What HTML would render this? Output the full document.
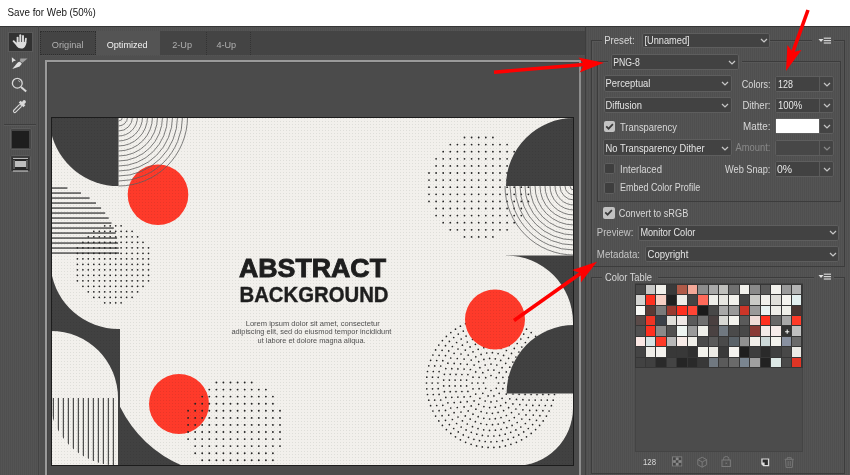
<!DOCTYPE html><html><head><meta charset="utf-8"><style>html,body{margin:0;padding:0;width:850px;height:475px;overflow:hidden;}body{position:relative;background:repeating-linear-gradient(90deg,#4f4f4f 0,#4f4f4f 1px,#545454 1px,#545454 2px);font-family:"Liberation Sans", sans-serif;}</style></head><body><div style="position:absolute;left:0;top:0;width:850px;height:26px;background:#ffffff"></div><div style="position:absolute;left:0;top:25.6px;width:850px;height:1px;background:#363636"></div><div style="position:absolute;left:38px;top:26px;width:1px;height:449px;background:#434343"></div><div style="position:absolute;left:8px;top:32.3px;width:24.8px;height:19.9px;background:#474747;box-shadow:inset 0 0 0 1px #5a5a5a"></div><div style="position:absolute;left:9.2px;top:33.3px;width:22.4px;height:17.9px;background:#323232"></div><svg style="position:absolute;left:0;top:0" width="40" height="180" viewBox="0 0 40 180"><g stroke="#dcdcdc" stroke-linecap="round" fill="none"><line x1="17.6" y1="37.6" x2="17.6" y2="43" stroke-width="1.9"/><line x1="20.3" y1="35.2" x2="20.3" y2="43" stroke-width="1.9"/><line x1="23" y1="36" x2="23" y2="43" stroke-width="1.9"/><line x1="25.9" y1="38.6" x2="25.3" y2="44" stroke-width="1.8"/><line x1="13.6" y1="41.2" x2="17.2" y2="45" stroke-width="1.9"/></g><path d="M16.6,42 L26.3,42 L25.6,45.5 Q24.5,48.6 21.2,48.6 Q18.3,48.6 16.6,46.2 Z" fill="#dcdcdc"/><path d="M11.85,57.2 L12,62.7 L13.5,61.2 L15.9,60.6 Z" fill="#dcdcdc"/><path d="M20.3,58.5 L27.5,58.4 L22.6,62.8 L20,61.2 Z" fill="#a0a0a0"/><path d="M12.3,68.9 L16.8,63.4 Q18.2,61.6 19.5,61.7 Q21.3,62 21.8,63.8 L19.6,66.4 Z" fill="#e2e2e2"/><circle cx="17.3" cy="83.2" r="4.9" fill="none" stroke="#d8d8d8" stroke-width="1.3"/><path d="M18.2,80.6 A2.6,2.6 0 0 1 20,82.2" fill="none" stroke="#d0d0d0" stroke-width="0.8"/><line x1="21" y1="87" x2="26.2" y2="91.6" stroke="#d8d8d8" stroke-width="2"/><g transform="translate(21.4 104.6) rotate(45)" fill="#dadada"><rect x="-1.7" y="-5.6" width="3.4" height="4" rx="1.6"/><rect x="-3.3" y="-2.3" width="6.6" height="2.8"/><rect x="-1.35" y="0.5" width="2.7" height="10.2" rx="1.35" fill="none" stroke="#d8d8d8" stroke-width="1.1"/></g></svg><div style="position:absolute;left:4px;top:124px;width:32px;height:1px;background:#3e3e3e"></div><div style="position:absolute;left:4px;top:125px;width:32px;height:1px;background:#5a5a5a"></div><div style="position:absolute;left:9.5px;top:128.3px;width:22.2px;height:22.099999999999994px;background:#454545;box-shadow:inset 0 0 0 1px #5c5c5c;border-radius:2px;"></div><div style="position:absolute;left:12px;top:130.5px;width:17px;height:17px;background:#1e1e1e"></div><div style="position:absolute;left:10.2px;top:154.5px;width:20.8px;height:17.69999999999999px;background:#3c3c3c;box-shadow:inset 0 0 0 1px #5c5c5c;border-radius:2px;"></div><svg style="position:absolute;left:0;top:150px" width="40" height="30" viewBox="0 150 40 30"><rect x="12.5" y="157.5" width="16" height="13" fill="#262626"/><line x1="13" y1="158.4" x2="28" y2="158.4" stroke="#c8c8c8" stroke-width="1"/><rect x="15" y="161" width="11" height="6" fill="#bdbdbd"/><line x1="13" y1="171" x2="28" y2="171" stroke="#d0d0d0" stroke-width="1"/><line x1="14" y1="160" x2="14" y2="169" stroke="#8a8a8a" stroke-width="1"/><line x1="27" y1="160" x2="27" y2="169" stroke="#8a8a8a" stroke-width="1"/></svg><div style="position:absolute;left:40px;top:31px;width:546px;height:24px;background:#444444"></div><div style="position:absolute;left:95.5px;top:31px;width:64.5px;height:24px;background:#545454"></div><div style="position:absolute;left:40px;top:31px;width:56px;height:24px;box-sizing:border-box;border:1px dotted #2e2e2e"></div><div style="position:absolute;left:206px;top:32px;width:0;height:23px;border-left:1px dotted #333"></div><div style="position:absolute;left:250.3px;top:32px;width:0;height:23px;border-left:1px dotted #333"></div><div style="position:absolute;left:40px;top:55.5px;width:546px;height:420px;background:#4f4f4f"></div><div style="position:absolute;left:44.7px;top:60px;width:536.3px;height:420px;background:#4b4b4b;border-left:2px solid #9a9a9a;border-top:2px solid #9a9a9a;border-right:2px solid #8e8e8e;box-sizing:border-box;box-shadow:inset 1px 1px 0 #444"></div><svg style="position:absolute;left:51px;top:117px" width="523" height="349" viewBox="51 117 523 349"><defs><clipPath id="ctl"><rect x="118.5" y="117" width="80" height="80"/></clipPath><clipPath id="ctr"><rect x="500" y="186" width="74" height="74"/></clipPath><pattern id="dith" width="3" height="3" patternUnits="userSpaceOnUse" x="0" y="0"><rect x="1" y="1" width="1" height="1" fill="#eaeceb"/></pattern><clipPath id="cvl"><circle cx="118" cy="397" r="68.5"/></clipPath></defs><rect x="51" y="117" width="523" height="349" fill="#f2f0ec"/><path d="M51,117 H118.5 V186 A69,69 0 0 1 51,132 Z" fill="#414141"/><circle cx="158" cy="194.7" r="30.3" fill="#fe3a2a"/><g clip-path="url(#ctl)"><circle cx="118.5" cy="117" r="4" fill="none" stroke="#606060" stroke-width="0.8"/><circle cx="118.5" cy="117" r="9" fill="none" stroke="#606060" stroke-width="0.8"/><circle cx="118.5" cy="117" r="14" fill="none" stroke="#606060" stroke-width="0.8"/><circle cx="118.5" cy="117" r="19" fill="none" stroke="#606060" stroke-width="0.8"/><circle cx="118.5" cy="117" r="24" fill="none" stroke="#606060" stroke-width="0.8"/><circle cx="118.5" cy="117" r="29" fill="none" stroke="#606060" stroke-width="0.8"/><circle cx="118.5" cy="117" r="34" fill="none" stroke="#606060" stroke-width="0.8"/><circle cx="118.5" cy="117" r="39" fill="none" stroke="#606060" stroke-width="0.8"/><circle cx="118.5" cy="117" r="44" fill="none" stroke="#606060" stroke-width="0.8"/><circle cx="118.5" cy="117" r="49" fill="none" stroke="#606060" stroke-width="0.8"/><circle cx="118.5" cy="117" r="54" fill="none" stroke="#606060" stroke-width="0.8"/><circle cx="118.5" cy="117" r="59" fill="none" stroke="#606060" stroke-width="0.8"/><circle cx="118.5" cy="117" r="64" fill="none" stroke="#606060" stroke-width="0.8"/><circle cx="118.5" cy="117" r="69" fill="none" stroke="#606060" stroke-width="0.8"/></g><rect x="51" y="252.4" width="68.0" height="1.3" fill="#3a3a3a"/><rect x="51" y="247.4" width="67.7" height="1.3" fill="#3a3a3a"/><rect x="51" y="242.4" width="67.1" height="1.3" fill="#3a3a3a"/><rect x="51" y="237.4" width="66.1" height="1.3" fill="#3a3a3a"/><rect x="51" y="232.4" width="64.7" height="1.3" fill="#3a3a3a"/><rect x="51" y="227.4" width="62.8" height="1.3" fill="#3a3a3a"/><rect x="51" y="222.4" width="60.5" height="1.3" fill="#3a3a3a"/><rect x="51" y="217.4" width="57.7" height="1.3" fill="#3a3a3a"/><rect x="51" y="212.4" width="54.2" height="1.3" fill="#3a3a3a"/><rect x="51" y="207.4" width="50.1" height="1.3" fill="#3a3a3a"/><rect x="51" y="202.4" width="45.0" height="1.3" fill="#3a3a3a"/><rect x="51" y="197.4" width="38.6" height="1.3" fill="#3a3a3a"/><rect x="51" y="192.4" width="30.0" height="1.3" fill="#3a3a3a"/><rect x="51" y="187.4" width="16.4" height="1.3" fill="#3a3a3a"/><path d="M77.4,247.8h0M77.4,253.3h0M77.4,258.8h0M77.4,264.3h0M77.4,269.8h0M77.4,275.3h0M77.4,280.8h0M82.9,242.3h0M82.9,247.8h0M82.9,253.3h0M82.9,258.8h0M82.9,264.3h0M82.9,269.8h0M82.9,275.3h0M82.9,280.8h0M82.9,286.3h0M88.3,236.8h0M88.3,242.3h0M88.3,247.8h0M88.3,253.3h0M88.3,258.8h0M88.3,264.3h0M88.3,269.8h0M88.3,275.3h0M88.3,280.8h0M88.3,286.3h0M88.3,291.8h0M93.8,231.3h0M93.8,236.8h0M93.8,242.3h0M93.8,247.8h0M93.8,253.3h0M93.8,258.8h0M93.8,264.3h0M93.8,269.8h0M93.8,275.3h0M93.8,280.8h0M93.8,286.3h0M93.8,291.8h0M93.8,297.3h0M99.3,231.3h0M99.3,236.8h0M99.3,242.3h0M99.3,247.8h0M99.3,253.3h0M99.3,258.8h0M99.3,264.3h0M99.3,269.8h0M99.3,275.3h0M99.3,280.8h0M99.3,286.3h0M99.3,291.8h0M99.3,297.3h0M104.7,225.8h0M104.7,231.3h0M104.7,236.8h0M104.7,242.3h0M104.7,247.8h0M104.7,253.3h0M104.7,258.8h0M104.7,264.3h0M104.7,269.8h0M104.7,275.3h0M104.7,280.8h0M104.7,286.3h0M104.7,291.8h0M104.7,297.3h0M104.7,302.8h0M110.2,225.8h0M110.2,231.3h0M110.2,236.8h0M110.2,242.3h0M110.2,247.8h0M110.2,253.3h0M110.2,258.8h0M110.2,264.3h0M110.2,269.8h0M110.2,275.3h0M110.2,280.8h0M110.2,286.3h0M110.2,291.8h0M110.2,297.3h0M110.2,302.8h0M115.7,225.8h0M115.7,231.3h0M115.7,236.8h0M115.7,242.3h0M115.7,247.8h0M115.7,253.3h0M115.7,258.8h0M115.7,264.3h0M115.7,269.8h0M115.7,275.3h0M115.7,280.8h0M115.7,286.3h0M115.7,291.8h0M115.7,297.3h0M115.7,302.8h0M121.1,225.8h0M121.1,231.3h0M121.1,236.8h0M121.1,242.3h0M121.1,247.8h0M121.1,253.3h0M121.1,258.8h0M121.1,264.3h0M121.1,269.8h0M121.1,275.3h0M121.1,280.8h0M121.1,286.3h0M121.1,291.8h0M121.1,297.3h0M121.1,302.8h0M126.6,231.3h0M126.6,236.8h0M126.6,242.3h0M126.6,247.8h0M126.6,253.3h0M126.6,258.8h0M126.6,264.3h0M126.6,269.8h0M126.6,275.3h0M126.6,280.8h0M126.6,286.3h0M126.6,291.8h0M126.6,297.3h0M132.1,231.3h0M132.1,236.8h0M132.1,242.3h0M132.1,247.8h0M132.1,253.3h0M132.1,258.8h0M132.1,264.3h0M132.1,269.8h0M132.1,275.3h0M132.1,280.8h0M132.1,286.3h0M132.1,291.8h0M132.1,297.3h0M137.6,236.8h0M137.6,242.3h0M137.6,247.8h0M137.6,253.3h0M137.6,258.8h0M137.6,264.3h0M137.6,269.8h0M137.6,275.3h0M137.6,280.8h0M137.6,286.3h0M137.6,291.8h0M143.0,242.3h0M143.0,247.8h0M143.0,253.3h0M143.0,258.8h0M143.0,264.3h0M143.0,269.8h0M143.0,275.3h0M143.0,280.8h0M143.0,286.3h0M148.5,247.8h0M148.5,253.3h0M148.5,258.8h0M148.5,264.3h0M148.5,269.8h0M148.5,275.3h0M148.5,280.8h0" stroke="#262626" stroke-width="1.75" stroke-linecap="round"/><path d="M51,270 A68,68 0 0 0 119,329 L120,329 L120,466 L51,466 Z" fill="#414141"/><path d="M51,466 V331 A67,67 0 0 1 118,398 V466 Z" fill="#f2f0ec"/><g clip-path="url(#cvl)"><rect x="112.8" y="398" width="1.1" height="70" fill="#3e3e3e"/><rect x="107.8" y="398" width="1.1" height="70" fill="#3e3e3e"/><rect x="102.8" y="398" width="1.1" height="70" fill="#3e3e3e"/><rect x="97.8" y="398" width="1.1" height="70" fill="#3e3e3e"/><rect x="92.8" y="398" width="1.1" height="70" fill="#3e3e3e"/><rect x="87.8" y="398" width="1.1" height="70" fill="#3e3e3e"/><rect x="82.8" y="398" width="1.1" height="70" fill="#3e3e3e"/><rect x="77.8" y="398" width="1.1" height="70" fill="#3e3e3e"/><rect x="72.8" y="398" width="1.1" height="70" fill="#3e3e3e"/><rect x="67.8" y="398" width="1.1" height="70" fill="#3e3e3e"/><rect x="62.8" y="398" width="1.1" height="70" fill="#3e3e3e"/><rect x="57.8" y="398" width="1.1" height="70" fill="#3e3e3e"/><rect x="52.8" y="398" width="1.1" height="70" fill="#3e3e3e"/></g><path d="M118,380 H120 V406.7 A126,126 0 0 0 182.9,466 H118 Z" fill="#414141"/><circle cx="179" cy="404" r="30" fill="#fe3a2a"/><path d="M188.1,410.8h0M188.1,417.9h0M188.1,424.9h0M188.1,432.0h0M188.1,439.1h0M195.2,403.7h0M195.2,410.8h0M195.2,417.9h0M195.2,424.9h0M195.2,432.0h0M195.2,439.1h0M195.2,446.1h0M195.2,453.2h0M202.2,396.6h0M202.2,403.7h0M202.2,410.8h0M202.2,417.9h0M202.2,424.9h0M202.2,432.0h0M202.2,439.1h0M202.2,446.1h0M202.2,453.2h0M202.2,460.3h0M209.3,389.6h0M209.3,396.6h0M209.3,403.7h0M209.3,410.8h0M209.3,417.9h0M209.3,424.9h0M209.3,432.0h0M209.3,439.1h0M209.3,446.1h0M209.3,453.2h0M209.3,460.3h0M216.4,382.5h0M216.4,389.6h0M216.4,396.6h0M216.4,403.7h0M216.4,410.8h0M216.4,417.9h0M216.4,424.9h0M216.4,432.0h0M216.4,439.1h0M216.4,446.1h0M216.4,453.2h0M216.4,460.3h0M223.4,382.5h0M223.4,389.6h0M223.4,396.6h0M223.4,403.7h0M223.4,410.8h0M223.4,417.9h0M223.4,424.9h0M223.4,432.0h0M223.4,439.1h0M223.4,446.1h0M223.4,453.2h0M223.4,460.3h0M230.5,382.5h0M230.5,389.6h0M230.5,396.6h0M230.5,403.7h0M230.5,410.8h0M230.5,417.9h0M230.5,424.9h0M230.5,432.0h0M230.5,439.1h0M230.5,446.1h0M230.5,453.2h0M230.5,460.3h0M237.6,382.5h0M237.6,389.6h0M237.6,396.6h0M237.6,403.7h0M237.6,410.8h0M237.6,417.9h0M237.6,424.9h0M237.6,432.0h0M237.6,439.1h0M237.6,446.1h0M237.6,453.2h0M237.6,460.3h0M244.7,382.5h0M244.7,389.6h0M244.7,396.6h0M244.7,403.7h0M244.7,410.8h0M244.7,417.9h0M244.7,424.9h0M244.7,432.0h0M244.7,439.1h0M244.7,446.1h0M244.7,453.2h0M244.7,460.3h0M251.7,382.5h0M251.7,389.6h0M251.7,396.6h0M251.7,403.7h0M251.7,410.8h0M251.7,417.9h0M251.7,424.9h0M251.7,432.0h0M251.7,439.1h0M251.7,446.1h0M251.7,453.2h0M251.7,460.3h0M258.8,389.6h0M258.8,396.6h0M258.8,403.7h0M258.8,410.8h0M258.8,417.9h0M258.8,424.9h0M258.8,432.0h0M258.8,439.1h0M258.8,446.1h0M258.8,453.2h0M258.8,460.3h0M265.9,389.6h0M265.9,396.6h0M265.9,403.7h0M265.9,410.8h0M265.9,417.9h0M265.9,424.9h0M265.9,432.0h0M265.9,439.1h0M265.9,446.1h0M265.9,453.2h0M265.9,460.3h0M272.9,396.6h0M272.9,403.7h0M272.9,410.8h0M272.9,417.9h0M272.9,424.9h0M272.9,432.0h0M272.9,439.1h0M272.9,446.1h0M272.9,453.2h0M272.9,460.3h0M280.0,410.8h0M280.0,417.9h0M280.0,424.9h0M280.0,432.0h0M280.0,439.1h0M280.0,446.1h0" stroke="#262626" stroke-width="1.9" stroke-linecap="round"/><path d="M429.0,173.0h0M429.0,180.1h0M429.0,187.2h0M429.0,194.3h0M429.0,201.4h0M436.1,158.8h0M436.1,165.9h0M436.1,173.0h0M436.1,180.1h0M436.1,187.2h0M436.1,194.3h0M436.1,201.4h0M436.1,208.5h0M436.1,215.6h0M443.2,151.7h0M443.2,158.8h0M443.2,165.9h0M443.2,173.0h0M443.2,180.1h0M443.2,187.2h0M443.2,194.3h0M443.2,201.4h0M443.2,208.5h0M443.2,215.6h0M443.2,222.7h0M450.3,144.6h0M450.3,151.7h0M450.3,158.8h0M450.3,165.9h0M450.3,173.0h0M450.3,180.1h0M450.3,187.2h0M450.3,194.3h0M450.3,201.4h0M450.3,208.5h0M450.3,215.6h0M450.3,222.7h0M450.3,229.8h0M457.4,144.6h0M457.4,151.7h0M457.4,158.8h0M457.4,165.9h0M457.4,173.0h0M457.4,180.1h0M457.4,187.2h0M457.4,194.3h0M457.4,201.4h0M457.4,208.5h0M457.4,215.6h0M457.4,222.7h0M457.4,229.8h0M464.5,137.5h0M464.5,144.6h0M464.5,151.7h0M464.5,158.8h0M464.5,165.9h0M464.5,173.0h0M464.5,180.1h0M464.5,187.2h0M464.5,194.3h0M464.5,201.4h0M464.5,208.5h0M464.5,215.6h0M464.5,222.7h0M464.5,229.8h0M464.5,236.9h0M471.6,137.5h0M471.6,144.6h0M471.6,151.7h0M471.6,158.8h0M471.6,165.9h0M471.6,173.0h0M471.6,180.1h0M471.6,187.2h0M471.6,194.3h0M471.6,201.4h0M471.6,208.5h0M471.6,215.6h0M471.6,222.7h0M471.6,229.8h0M471.6,236.9h0M478.7,137.5h0M478.7,144.6h0M478.7,151.7h0M478.7,158.8h0M478.7,165.9h0M478.7,173.0h0M478.7,180.1h0M478.7,187.2h0M478.7,194.3h0M478.7,201.4h0M478.7,208.5h0M478.7,215.6h0M478.7,222.7h0M478.7,229.8h0M478.7,236.9h0M485.8,137.5h0M485.8,144.6h0M485.8,151.7h0M485.8,158.8h0M485.8,165.9h0M485.8,173.0h0M485.8,180.1h0M485.8,187.2h0M485.8,194.3h0M485.8,201.4h0M485.8,208.5h0M485.8,215.6h0M485.8,222.7h0M485.8,229.8h0M485.8,236.9h0M492.9,137.5h0M492.9,144.6h0M492.9,151.7h0M492.9,158.8h0M492.9,165.9h0M492.9,173.0h0M492.9,180.1h0M492.9,187.2h0M492.9,194.3h0M492.9,201.4h0M492.9,208.5h0M492.9,215.6h0M492.9,222.7h0M492.9,229.8h0M492.9,236.9h0M500.0,144.6h0M500.0,151.7h0M500.0,158.8h0M500.0,165.9h0M500.0,173.0h0M500.0,180.1h0M500.0,187.2h0M500.0,194.3h0M500.0,201.4h0M500.0,208.5h0M500.0,215.6h0M500.0,222.7h0M500.0,229.8h0M507.1,144.6h0M507.1,151.7h0M507.1,158.8h0M507.1,165.9h0M507.1,173.0h0M507.1,180.1h0M507.1,187.2h0M507.1,194.3h0M507.1,201.4h0M507.1,208.5h0M507.1,215.6h0M507.1,222.7h0M507.1,229.8h0M514.2,151.7h0M514.2,158.8h0M514.2,165.9h0M514.2,173.0h0M514.2,180.1h0M514.2,187.2h0M514.2,194.3h0M514.2,201.4h0M514.2,208.5h0M514.2,215.6h0M514.2,222.7h0M521.3,158.8h0M521.3,165.9h0M521.3,173.0h0M521.3,180.1h0M521.3,187.2h0M521.3,194.3h0M521.3,201.4h0M521.3,208.5h0M521.3,215.6h0M528.4,173.0h0M528.4,180.1h0M528.4,187.2h0M528.4,194.3h0M528.4,201.4h0" stroke="#262626" stroke-width="1.8" stroke-linecap="round"/><path d="M574,117 V186 H506 A68,68 0 0 1 574,118 Z" fill="#414141"/><g clip-path="url(#ctr)"><circle cx="574" cy="186" r="4" fill="none" stroke="#606060" stroke-width="0.8"/><circle cx="574" cy="186" r="9" fill="none" stroke="#606060" stroke-width="0.8"/><circle cx="574" cy="186" r="14" fill="none" stroke="#606060" stroke-width="0.8"/><circle cx="574" cy="186" r="19" fill="none" stroke="#606060" stroke-width="0.8"/><circle cx="574" cy="186" r="24" fill="none" stroke="#606060" stroke-width="0.8"/><circle cx="574" cy="186" r="29" fill="none" stroke="#606060" stroke-width="0.8"/><circle cx="574" cy="186" r="34" fill="none" stroke="#606060" stroke-width="0.8"/><circle cx="574" cy="186" r="39" fill="none" stroke="#606060" stroke-width="0.8"/><circle cx="574" cy="186" r="44" fill="none" stroke="#606060" stroke-width="0.8"/><circle cx="574" cy="186" r="49" fill="none" stroke="#606060" stroke-width="0.8"/><circle cx="574" cy="186" r="54" fill="none" stroke="#606060" stroke-width="0.8"/><circle cx="574" cy="186" r="59" fill="none" stroke="#606060" stroke-width="0.8"/><circle cx="574" cy="186" r="64" fill="none" stroke="#606060" stroke-width="0.8"/><circle cx="574" cy="186" r="69" fill="none" stroke="#606060" stroke-width="0.8"/></g><rect x="506" y="255.5" width="68" height="211" fill="#414141"/><path d="M505,255.5 H506 A67,67 0 0 1 573,322.5 V408 A58,58 0 0 1 515,466 H505 Z" fill="#f2f0ec"/><path d="M498.5,383.0h0M496.3,388.3h0M491.0,390.5h0M485.7,388.3h0M483.5,383.0h0M485.7,377.7h0M491.0,375.5h0M496.3,377.7h0M504.2,383.0h0M502.9,388.7h0M499.2,393.3h0M493.9,395.9h0M488.1,395.9h0M482.8,393.3h0M479.1,388.7h0M477.8,383.0h0M479.1,377.3h0M482.8,372.7h0M488.1,370.1h0M493.9,370.1h0M499.2,372.7h0M502.9,377.3h0M509.9,383.0h0M509.0,388.8h0M506.3,394.1h0M502.1,398.3h0M496.8,401.0h0M491.0,401.9h0M485.2,401.0h0M479.9,398.3h0M475.7,394.1h0M473.0,388.8h0M472.1,383.0h0M473.0,377.2h0M475.7,371.9h0M479.9,367.7h0M485.2,365.0h0M491.0,364.1h0M496.8,365.0h0M502.1,367.7h0M506.3,371.9h0M509.0,377.2h0M515.6,383.0h0M514.9,388.7h0M513.0,394.0h0M509.8,398.8h0M505.7,402.7h0M500.7,405.6h0M495.3,407.2h0M489.6,407.6h0M483.9,406.6h0M478.7,404.3h0M474.1,400.9h0M470.4,396.5h0M467.9,391.4h0M466.6,385.9h0M466.6,380.1h0M467.9,374.6h0M470.4,369.5h0M474.1,365.1h0M478.7,361.7h0M483.9,359.4h0M489.6,358.4h0M495.3,358.8h0M500.7,360.4h0M505.7,363.3h0M509.8,367.2h0M513.0,372.0h0M514.9,377.3h0M521.3,383.0h0M520.8,388.7h0M519.1,394.3h0M516.5,399.4h0M512.9,403.9h0M508.6,407.7h0M503.6,410.6h0M498.1,412.4h0M492.4,413.3h0M486.7,413.0h0M481.1,411.6h0M475.9,409.2h0M471.2,405.9h0M467.2,401.7h0M464.1,396.9h0M461.9,391.5h0M460.8,385.9h0M460.8,380.1h0M461.9,374.5h0M464.1,369.1h0M467.2,364.3h0M471.2,360.1h0M475.8,356.8h0M481.1,354.4h0M486.7,353.0h0M492.4,352.7h0M498.1,353.6h0M503.6,355.4h0M508.6,358.3h0M512.9,362.1h0M516.5,366.6h0M519.1,371.7h0M520.8,377.3h0M527.0,383.0h0M526.5,388.8h0M525.1,394.4h0M522.9,399.7h0M519.8,404.6h0M515.9,409.0h0M511.5,412.6h0M506.4,415.5h0M501.0,417.6h0M495.3,418.7h0M489.6,419.0h0M483.8,418.3h0M478.2,416.7h0M473.0,414.2h0M468.2,410.9h0M464.1,406.9h0M460.6,402.2h0M457.9,397.1h0M456.0,391.6h0M455.1,385.9h0M455.1,380.1h0M456.0,374.4h0M457.9,368.9h0M460.6,363.8h0M464.1,359.1h0M468.2,355.1h0M473.0,351.8h0M478.2,349.3h0M483.8,347.7h0M489.6,347.0h0M495.3,347.3h0M501.0,348.4h0M506.4,350.5h0M511.5,353.4h0M515.9,357.0h0M519.8,361.4h0M522.9,366.3h0M525.1,371.6h0M526.5,377.2h0M532.7,383.0h0M532.3,388.8h0M531.1,394.5h0M529.1,400.0h0M526.4,405.1h0M522.9,409.8h0M518.9,414.0h0M514.3,417.6h0M509.3,420.5h0M503.9,422.7h0M498.2,424.1h0M492.5,424.7h0M486.6,424.5h0M480.9,423.5h0M475.4,421.7h0M470.2,419.1h0M465.3,415.9h0M461.0,412.0h0M457.3,407.5h0M454.2,402.6h0M451.8,397.3h0M450.2,391.7h0M449.4,385.9h0M449.4,380.1h0M450.2,374.3h0M451.8,368.7h0M454.2,363.4h0M457.3,358.5h0M461.0,354.0h0M465.3,350.1h0M470.1,346.9h0M475.4,344.3h0M480.9,342.5h0M486.6,341.5h0M492.5,341.3h0M498.2,341.9h0M503.9,343.3h0M509.3,345.5h0M514.3,348.4h0M518.9,352.0h0M522.9,356.2h0M526.4,360.9h0M529.1,366.0h0M531.1,371.5h0M532.3,377.2h0M538.4,383.0h0M538.0,388.8h0M537.0,394.6h0M535.2,400.1h0M532.8,405.4h0M529.7,410.4h0M526.0,414.9h0M521.8,419.0h0M517.2,422.5h0M512.1,425.4h0M506.8,427.7h0M501.1,429.3h0M495.4,430.2h0M489.5,430.4h0M483.7,429.8h0M478.0,428.6h0M472.5,426.7h0M467.3,424.0h0M462.4,420.8h0M458.0,417.0h0M454.1,412.7h0M450.7,408.0h0M447.9,402.8h0M445.8,397.4h0M444.4,391.7h0M443.7,385.9h0M443.7,380.1h0M444.4,374.3h0M445.8,368.6h0M447.9,363.2h0M450.7,358.0h0M454.1,353.3h0M458.0,349.0h0M462.4,345.2h0M467.3,342.0h0M472.5,339.3h0M478.0,337.4h0M483.7,336.2h0M489.5,335.6h0M495.4,335.8h0M501.1,336.7h0M506.8,338.3h0M512.1,340.6h0M517.2,343.5h0M521.8,347.0h0M526.0,351.1h0M529.7,355.6h0M532.8,360.6h0M535.2,365.9h0M537.0,371.4h0M538.0,377.2h0M544.1,383.0h0M543.8,388.7h0M542.9,394.4h0M541.3,400.0h0M539.2,405.3h0M536.5,410.4h0M533.3,415.1h0M529.6,419.5h0M525.4,423.5h0M520.8,427.0h0M515.9,429.9h0M510.7,432.3h0M505.2,434.2h0M499.6,435.4h0M493.9,436.0h0M488.1,436.0h0M482.4,435.4h0M476.8,434.2h0M471.3,432.3h0M466.1,429.9h0M461.2,427.0h0M456.6,423.5h0M452.4,419.5h0M448.7,415.1h0M445.5,410.4h0M442.8,405.3h0M440.7,400.0h0M439.1,394.4h0M438.2,388.7h0M437.9,383.0h0M438.2,377.3h0M439.1,371.6h0M440.7,366.0h0M442.8,360.7h0M445.5,355.6h0M448.7,350.9h0M452.4,346.5h0M456.6,342.5h0M461.2,339.0h0M466.1,336.1h0M471.3,333.7h0M476.8,331.8h0M482.4,330.6h0M488.1,330.0h0M493.9,330.0h0M499.6,330.6h0M505.2,331.8h0M510.7,333.7h0M515.9,336.1h0M520.8,339.0h0M525.4,342.5h0M529.6,346.5h0M533.3,350.9h0M536.5,355.6h0M539.2,360.7h0M541.3,366.0h0M542.9,371.6h0M543.8,377.3h0M549.8,383.0h0M549.5,388.8h0M548.7,394.5h0M547.3,400.1h0M545.3,405.5h0M542.9,410.7h0M539.9,415.7h0M536.5,420.3h0M532.6,424.6h0M528.3,428.5h0M523.7,431.9h0M518.7,434.9h0M513.5,437.3h0M508.1,439.3h0M502.5,440.7h0M496.8,441.5h0M491.0,441.8h0M485.2,441.5h0M479.5,440.7h0M473.9,439.3h0M468.5,437.3h0M463.3,434.9h0M458.3,431.9h0M453.7,428.5h0M449.4,424.6h0M445.5,420.3h0M442.1,415.7h0M439.1,410.7h0M436.7,405.5h0M434.7,400.1h0M433.3,394.5h0M432.5,388.8h0M432.2,383.0h0M432.5,377.2h0M433.3,371.5h0M434.7,365.9h0M436.7,360.5h0M439.1,355.3h0M442.1,350.3h0M445.5,345.7h0M449.4,341.4h0M453.7,337.5h0M458.3,334.1h0M463.3,331.1h0M468.5,328.7h0M473.9,326.7h0M479.5,325.3h0M485.2,324.5h0M491.0,324.2h0M496.8,324.5h0M502.5,325.3h0M508.1,326.7h0M513.5,328.7h0M518.7,331.1h0M523.7,334.1h0M528.3,337.5h0M532.6,341.4h0M536.5,345.7h0M539.9,350.3h0M542.9,355.3h0M545.3,360.5h0M547.3,365.9h0M548.7,371.5h0M549.5,377.2h0M555.5,383.0h0M555.2,388.8h0M554.5,394.5h0M553.2,400.2h0M551.4,405.7h0M549.1,411.0h0M546.4,416.1h0M543.2,420.9h0M539.6,425.4h0M535.6,429.6h0M531.2,433.4h0M526.5,436.8h0M521.6,439.8h0M516.4,442.3h0M510.9,444.3h0M505.4,445.9h0M499.7,446.9h0M493.9,447.4h0M488.1,447.4h0M482.3,446.9h0M476.6,445.9h0M471.1,444.3h0M465.6,442.3h0M460.4,439.8h0M455.5,436.8h0M450.8,433.4h0M446.4,429.6h0M442.4,425.4h0M438.8,420.9h0M435.6,416.1h0M432.9,411.0h0M430.6,405.7h0M428.8,400.2h0M427.5,394.5h0M426.8,388.8h0M426.5,383.0h0M426.8,377.2h0M427.5,371.5h0M428.8,365.8h0M430.6,360.3h0M432.9,355.0h0M435.6,349.9h0M438.8,345.1h0M442.4,340.6h0M446.4,336.4h0M450.8,332.6h0M455.5,329.2h0M460.4,326.2h0M465.6,323.7h0M471.1,321.7h0M476.6,320.1h0M482.3,319.1h0M488.1,318.6h0M493.9,318.6h0M499.7,319.1h0M505.4,320.1h0M510.9,321.7h0M516.4,323.7h0M521.6,326.2h0M526.5,329.2h0M531.2,332.6h0M535.6,336.4h0M539.6,340.6h0M543.2,345.1h0M546.4,349.9h0M549.1,355.0h0M551.4,360.3h0M553.2,365.8h0M554.5,371.5h0M555.2,377.2h0" stroke="#262626" stroke-width="1.7" stroke-linecap="round"/><circle cx="495" cy="319.5" r="30" fill="#fe3a2a"/><path d="M574,325 V393.6 H506.6 A67.4,68.6 0 0 1 574,325 Z" fill="#414141"/><rect x="51" y="117" width="523" height="349" fill="url(#dith)" style="mix-blend-mode:multiply"/><text x="312.5" y="277.0" font-family="Liberation Sans" font-weight="bold" font-size="25.6" fill="#1e1e1e" stroke="#1e1e1e" stroke-width="0.9" text-anchor="middle" textLength="147" lengthAdjust="spacingAndGlyphs">ABSTRACT</text><text x="314" y="302.2" font-family="Liberation Sans" font-weight="bold" font-size="21.4" fill="#1e1e1e" stroke="#1e1e1e" stroke-width="0.4" text-anchor="middle" textLength="149" lengthAdjust="spacingAndGlyphs">BACKGROUND</text><text x="312.7" y="325.8" font-family="Liberation Sans" font-size="8" fill="#505050" text-anchor="middle" textLength="134" lengthAdjust="spacingAndGlyphs">Lorem ipsum dolor sit amet, consectetur</text><text x="311.4" y="333.9" font-family="Liberation Sans" font-size="8" fill="#505050" text-anchor="middle" textLength="160" lengthAdjust="spacingAndGlyphs">adipiscing elit, sed do eiusmod tempor incididunt</text><text x="311.6" y="342.6" font-family="Liberation Sans" font-size="8" fill="#505050" text-anchor="middle" textLength="108" lengthAdjust="spacingAndGlyphs">ut labore et dolore magna aliqua.</text><rect x="51.5" y="117.5" width="522" height="348" fill="none" stroke="#1c1c1c" stroke-width="1"/></svg><div style="position:absolute;left:585px;top:26px;width:1px;height:449px;background:#3e3e3e"></div><div style="position:absolute;left:591px;top:39.6px;width:253.60000000000002px;height:227.20000000000002px;box-shadow:inset 0 0 0 1px #3c3c3c, inset 1px 1px 0 1px #585858"></div><div style="position:absolute;left:602px;top:33px;width:168px;height:14px;background:repeating-linear-gradient(90deg,#4f4f4f 0,#4f4f4f 1px,#545454 1px,#545454 2px);background-attachment:fixed"></div><div style="position:absolute;left:812px;top:33px;width:22px;height:14px;background:repeating-linear-gradient(90deg,#4f4f4f 0,#4f4f4f 1px,#545454 1px,#545454 2px);background-attachment:fixed"></div><div style="position:absolute;left:641.8px;top:32.9px;width:128.60000000000002px;height:15.5px;background:#424242;box-shadow:inset 0 0 0 1px #5e5e5e;border-radius:2px;"></div><svg style="position:absolute;left:759.6999999999999px;top:38.35px" width="8" height="5" viewBox="0 0 8 5"><polyline points="1,1 4,3.9 7,1" fill="none" stroke="#c6c6c6" stroke-width="1.3"/></svg><svg style="position:absolute;left:818px;top:37px" width="14" height="8" viewBox="0 0 14 8"><path d="M0.5,2 L5.5,2 L3,5 Z" fill="#e0e0e0"/><rect x="5.8" y="0.6" width="7.2" height="1.2" fill="#d4d4d4"/><rect x="5.8" y="3" width="7.2" height="1.2" fill="#d4d4d4"/><rect x="5.8" y="5.4" width="7.2" height="1.2" fill="#d4d4d4"/></svg><div style="position:absolute;left:597px;top:61px;width:243.5px;height:140.5px;box-shadow:inset 0 0 0 1px #3c3c3c, inset 1px 1px 0 1px #585858"></div><div style="position:absolute;left:608px;top:52px;width:134px;height:20px;background:repeating-linear-gradient(90deg,#4f4f4f 0,#4f4f4f 1px,#545454 1px,#545454 2px);background-attachment:fixed"></div><div style="position:absolute;left:611.4px;top:54px;width:127.39999999999998px;height:16px;background:#424242;box-shadow:inset 0 0 0 1px #5e5e5e;border-radius:2px;"></div><svg style="position:absolute;left:728.0999999999999px;top:59.7px" width="8" height="5" viewBox="0 0 8 5"><polyline points="1,1 4,3.9 7,1" fill="none" stroke="#c6c6c6" stroke-width="1.3"/></svg><div style="position:absolute;left:603.5px;top:75.1px;width:128.0px;height:16.700000000000003px;background:#424242;box-shadow:inset 0 0 0 1px #5e5e5e;border-radius:2px;"></div><svg style="position:absolute;left:720.8px;top:81.14999999999999px" width="8" height="5" viewBox="0 0 8 5"><polyline points="1,1 4,3.9 7,1" fill="none" stroke="#c6c6c6" stroke-width="1.3"/></svg><div style="position:absolute;left:603.5px;top:97.3px;width:128.0px;height:15.700000000000003px;background:#424242;box-shadow:inset 0 0 0 1px #5e5e5e;border-radius:2px;"></div><svg style="position:absolute;left:720.8px;top:102.85000000000001px" width="8" height="5" viewBox="0 0 8 5"><polyline points="1,1 4,3.9 7,1" fill="none" stroke="#c6c6c6" stroke-width="1.3"/></svg><div style="position:absolute;left:775px;top:76px;width:59px;height:16px;background:#444444;box-shadow:inset 0 0 0 1px #5e5e5e;border-radius:2px;"></div><div style="position:absolute;left:776px;top:77px;width:42.60000000000002px;height:14px;background:#424242"></div><div style="position:absolute;left:818.6px;top:77px;width:1px;height:14px;background:#5a5a5a"></div><svg style="position:absolute;left:822.8px;top:81.8px" width="8" height="5" viewBox="0 0 8 5"><polyline points="1,1 4,3.9 7,1" fill="none" stroke="#c4c4c4" stroke-width="1.3"/></svg><div style="position:absolute;left:775px;top:98px;width:59px;height:15px;background:#444444;box-shadow:inset 0 0 0 1px #5e5e5e;border-radius:2px;"></div><div style="position:absolute;left:776px;top:99px;width:42.60000000000002px;height:13px;background:#424242"></div><div style="position:absolute;left:818.6px;top:99px;width:1px;height:13px;background:#5a5a5a"></div><svg style="position:absolute;left:822.8px;top:103.3px" width="8" height="5" viewBox="0 0 8 5"><polyline points="1,1 4,3.9 7,1" fill="none" stroke="#c4c4c4" stroke-width="1.3"/></svg><div style="position:absolute;left:603.6999999999999px;top:121.3px;width:11.3px;height:11.2px;background:#c2c2c2;border-radius:2px"></div><svg style="position:absolute;left:603.6999999999999px;top:121.3px" width="12" height="12" viewBox="0 0 12 12"><polyline points="2.2,5.3 4.6,7.7 8.9,3.1" fill="none" stroke="#3a3a3a" stroke-width="1.7"/></svg><div style="position:absolute;left:775px;top:118px;width:59px;height:16px;background:#444444;box-shadow:inset 0 0 0 1px #5e5e5e;border-radius:2px;"></div><div style="position:absolute;left:776px;top:119px;width:42.60000000000002px;height:14px;background:#ffffff"></div><div style="position:absolute;left:818.6px;top:119px;width:1px;height:14px;background:#5a5a5a"></div><svg style="position:absolute;left:822.8px;top:123.8px" width="8" height="5" viewBox="0 0 8 5"><polyline points="1,1 4,3.9 7,1" fill="none" stroke="#c4c4c4" stroke-width="1.3"/></svg><div style="position:absolute;left:603.3px;top:139.4px;width:128.4000000000001px;height:17.0px;background:#424242;box-shadow:inset 0 0 0 1px #5e5e5e;border-radius:2px;"></div><svg style="position:absolute;left:721.0px;top:145.6px" width="8" height="5" viewBox="0 0 8 5"><polyline points="1,1 4,3.9 7,1" fill="none" stroke="#c6c6c6" stroke-width="1.3"/></svg><div style="position:absolute;left:775px;top:140px;width:59px;height:16px;background:#444444;box-shadow:inset 0 0 0 1px #5e5e5e;border-radius:2px;"></div><div style="position:absolute;left:776px;top:141px;width:42.60000000000002px;height:14px;background:#474747"></div><div style="position:absolute;left:818.6px;top:141px;width:1px;height:14px;background:#5a5a5a"></div><svg style="position:absolute;left:822.8px;top:145.8px" width="8" height="5" viewBox="0 0 8 5"><polyline points="1,1 4,3.9 7,1" fill="none" stroke="#8a8a8a" stroke-width="1.3"/></svg><div style="position:absolute;left:603.6999999999999px;top:162.9px;width:11.3px;height:11.2px;background:#3e3e3e;box-shadow:inset 0 0 0 1px #5e5e5e;border-radius:2px"></div><div style="position:absolute;left:775px;top:161px;width:59px;height:16px;background:#444444;box-shadow:inset 0 0 0 1px #5e5e5e;border-radius:2px;"></div><div style="position:absolute;left:776px;top:162px;width:42.60000000000002px;height:14px;background:#424242"></div><div style="position:absolute;left:818.6px;top:162px;width:1px;height:14px;background:#5a5a5a"></div><svg style="position:absolute;left:822.8px;top:166.8px" width="8" height="5" viewBox="0 0 8 5"><polyline points="1,1 4,3.9 7,1" fill="none" stroke="#c4c4c4" stroke-width="1.3"/></svg><div style="position:absolute;left:603.6999999999999px;top:182.4px;width:11.3px;height:11.2px;background:#3e3e3e;box-shadow:inset 0 0 0 1px #5e5e5e;border-radius:2px"></div><div style="position:absolute;left:603.4px;top:207.4px;width:11.3px;height:11.2px;background:#c2c2c2;border-radius:2px"></div><svg style="position:absolute;left:603.4px;top:207.4px" width="12" height="12" viewBox="0 0 12 12"><polyline points="2.2,5.3 4.6,7.7 8.9,3.1" fill="none" stroke="#3a3a3a" stroke-width="1.7"/></svg><div style="position:absolute;left:638.1px;top:224.5px;width:201.39999999999998px;height:16.30000000000001px;background:#424242;box-shadow:inset 0 0 0 1px #5e5e5e;border-radius:2px;"></div><svg style="position:absolute;left:828.8px;top:230.35px" width="8" height="5" viewBox="0 0 8 5"><polyline points="1,1 4,3.9 7,1" fill="none" stroke="#c6c6c6" stroke-width="1.3"/></svg><div style="position:absolute;left:644.7px;top:246px;width:194.79999999999995px;height:16px;background:#424242;box-shadow:inset 0 0 0 1px #5e5e5e;border-radius:2px;"></div><svg style="position:absolute;left:828.8px;top:251.7px" width="8" height="5" viewBox="0 0 8 5"><polyline points="1,1 4,3.9 7,1" fill="none" stroke="#c6c6c6" stroke-width="1.3"/></svg><div style="position:absolute;left:591px;top:276.7px;width:254px;height:197.3px;box-shadow:inset 0 0 0 1px #3c3c3c, inset 1px 1px 0 1px #585858"></div><div style="position:absolute;left:602px;top:270px;width:56px;height:12px;background:repeating-linear-gradient(90deg,#4f4f4f 0,#4f4f4f 1px,#545454 1px,#545454 2px);background-attachment:fixed"></div><div style="position:absolute;left:814px;top:270px;width:20px;height:12px;background:repeating-linear-gradient(90deg,#4f4f4f 0,#4f4f4f 1px,#545454 1px,#545454 2px);background-attachment:fixed"></div><svg style="position:absolute;left:818px;top:273.2px" width="14" height="8" viewBox="0 0 14 8"><path d="M0.5,2 L5.5,2 L3,5 Z" fill="#e0e0e0"/><rect x="5.8" y="0.6" width="7.2" height="1.2" fill="#d4d4d4"/><rect x="5.8" y="3" width="7.2" height="1.2" fill="#d4d4d4"/><rect x="5.8" y="5.4" width="7.2" height="1.2" fill="#d4d4d4"/></svg><div style="position:absolute;left:635px;top:283px;width:167.5px;height:169.3px;background:#4c4c4c;box-shadow:inset 0 0 0 1px #444444"></div><div style="position:absolute;left:635px;top:284px;width:167.6px;height:84.4px;background:#363636"></div><div style="position:absolute;left:635.50px;top:284.70px;width:9.4px;height:9.4px;background:#4a4a4a"></div><div style="position:absolute;left:645.94px;top:284.70px;width:9.4px;height:9.4px;background:#c8c8c6"></div><div style="position:absolute;left:656.38px;top:284.70px;width:9.4px;height:9.4px;background:#f0efea"></div><div style="position:absolute;left:666.82px;top:284.70px;width:9.4px;height:9.4px;background:#3a3a3a"></div><div style="position:absolute;left:677.26px;top:284.70px;width:9.4px;height:9.4px;background:#b05a48"></div><div style="position:absolute;left:687.70px;top:284.70px;width:9.4px;height:9.4px;background:#f4a898"></div><div style="position:absolute;left:698.14px;top:284.70px;width:9.4px;height:9.4px;background:#8c8c8c"></div><div style="position:absolute;left:708.58px;top:284.70px;width:9.4px;height:9.4px;background:#a8a8a8"></div><div style="position:absolute;left:719.02px;top:284.70px;width:9.4px;height:9.4px;background:#c0c0bd"></div><div style="position:absolute;left:729.46px;top:284.70px;width:9.4px;height:9.4px;background:#707070"></div><div style="position:absolute;left:739.90px;top:284.70px;width:9.4px;height:9.4px;background:#f2f1ec"></div><div style="position:absolute;left:750.34px;top:284.70px;width:9.4px;height:9.4px;background:#8a8a8a"></div><div style="position:absolute;left:760.78px;top:284.70px;width:9.4px;height:9.4px;background:#5a5a5a"></div><div style="position:absolute;left:771.22px;top:284.70px;width:9.4px;height:9.4px;background:#f3f2ed"></div><div style="position:absolute;left:781.66px;top:284.70px;width:9.4px;height:9.4px;background:#9a9a9a"></div><div style="position:absolute;left:792.10px;top:284.70px;width:9.4px;height:9.4px;background:#b4b4b4"></div><div style="position:absolute;left:635.50px;top:295.14px;width:9.4px;height:9.4px;background:#d4d4d2"></div><div style="position:absolute;left:645.94px;top:295.14px;width:9.4px;height:9.4px;background:#ff3020"></div><div style="position:absolute;left:656.38px;top:295.14px;width:9.4px;height:9.4px;background:#f7cfc4"></div><div style="position:absolute;left:666.82px;top:295.14px;width:9.4px;height:9.4px;background:#202020"></div><div style="position:absolute;left:677.26px;top:295.14px;width:9.4px;height:9.4px;background:#eeede8"></div><div style="position:absolute;left:687.70px;top:295.14px;width:9.4px;height:9.4px;background:#444444"></div><div style="position:absolute;left:698.14px;top:295.14px;width:9.4px;height:9.4px;background:#ff6a5a"></div><div style="position:absolute;left:708.58px;top:295.14px;width:9.4px;height:9.4px;background:#efefea"></div><div style="position:absolute;left:719.02px;top:295.14px;width:9.4px;height:9.4px;background:#e8e7e2"></div><div style="position:absolute;left:729.46px;top:295.14px;width:9.4px;height:9.4px;background:#f3f2ed"></div><div style="position:absolute;left:739.90px;top:295.14px;width:9.4px;height:9.4px;background:#454545"></div><div style="position:absolute;left:750.34px;top:295.14px;width:9.4px;height:9.4px;background:#cacac6"></div><div style="position:absolute;left:760.78px;top:295.14px;width:9.4px;height:9.4px;background:#f1f0ec"></div><div style="position:absolute;left:771.22px;top:295.14px;width:9.4px;height:9.4px;background:#e0dfda"></div><div style="position:absolute;left:781.66px;top:295.14px;width:9.4px;height:9.4px;background:#f6f5f0"></div><div style="position:absolute;left:792.10px;top:295.14px;width:9.4px;height:9.4px;background:#e4f0f0"></div><div style="position:absolute;left:635.50px;top:305.58px;width:9.4px;height:9.4px;background:#f8f8f5"></div><div style="position:absolute;left:645.94px;top:305.58px;width:9.4px;height:9.4px;background:#5a3a35"></div><div style="position:absolute;left:656.38px;top:305.58px;width:9.4px;height:9.4px;background:#7a7a7a"></div><div style="position:absolute;left:666.82px;top:305.58px;width:9.4px;height:9.4px;background:#9a3a30"></div><div style="position:absolute;left:677.26px;top:305.58px;width:9.4px;height:9.4px;background:#ff3020"></div><div style="position:absolute;left:687.70px;top:305.58px;width:9.4px;height:9.4px;background:#ff4535"></div><div style="position:absolute;left:698.14px;top:305.58px;width:9.4px;height:9.4px;background:#1a1a1a"></div><div style="position:absolute;left:708.58px;top:305.58px;width:9.4px;height:9.4px;background:#484848"></div><div style="position:absolute;left:719.02px;top:305.58px;width:9.4px;height:9.4px;background:#a8a8a8"></div><div style="position:absolute;left:729.46px;top:305.58px;width:9.4px;height:9.4px;background:#999999"></div><div style="position:absolute;left:739.90px;top:305.58px;width:9.4px;height:9.4px;background:#cc3528"></div><div style="position:absolute;left:750.34px;top:305.58px;width:9.4px;height:9.4px;background:#9a9a9a"></div><div style="position:absolute;left:760.78px;top:305.58px;width:9.4px;height:9.4px;background:#e8f2f2"></div><div style="position:absolute;left:771.22px;top:305.58px;width:9.4px;height:9.4px;background:#eeede8"></div><div style="position:absolute;left:781.66px;top:305.58px;width:9.4px;height:9.4px;background:#f0f0ea"></div><div style="position:absolute;left:792.10px;top:305.58px;width:9.4px;height:9.4px;background:#4a3532"></div><div style="position:absolute;left:635.50px;top:316.02px;width:9.4px;height:9.4px;background:#5a4a48"></div><div style="position:absolute;left:645.94px;top:316.02px;width:9.4px;height:9.4px;background:#ee3525"></div><div style="position:absolute;left:656.38px;top:316.02px;width:9.4px;height:9.4px;background:#3a4048"></div><div style="position:absolute;left:666.82px;top:316.02px;width:9.4px;height:9.4px;background:#e0dfda"></div><div style="position:absolute;left:677.26px;top:316.02px;width:9.4px;height:9.4px;background:#efe8e6"></div><div style="position:absolute;left:687.70px;top:316.02px;width:9.4px;height:9.4px;background:#5a5a5a"></div><div style="position:absolute;left:698.14px;top:316.02px;width:9.4px;height:9.4px;background:#707070"></div><div style="position:absolute;left:708.58px;top:316.02px;width:9.4px;height:9.4px;background:#4a4040"></div><div style="position:absolute;left:719.02px;top:316.02px;width:9.4px;height:9.4px;background:#d8d8d4"></div><div style="position:absolute;left:729.46px;top:316.02px;width:9.4px;height:9.4px;background:#f3f2ed"></div><div style="position:absolute;left:739.90px;top:316.02px;width:9.4px;height:9.4px;background:#5a5a5a"></div><div style="position:absolute;left:750.34px;top:316.02px;width:9.4px;height:9.4px;background:#f0dcd8"></div><div style="position:absolute;left:760.78px;top:316.02px;width:9.4px;height:9.4px;background:#ff3020"></div><div style="position:absolute;left:771.22px;top:316.02px;width:9.4px;height:9.4px;background:#686868"></div><div style="position:absolute;left:781.66px;top:316.02px;width:9.4px;height:9.4px;background:#a8a8a8"></div><div style="position:absolute;left:792.10px;top:316.02px;width:9.4px;height:9.4px;background:#ff3a28"></div><div style="position:absolute;left:635.50px;top:326.46px;width:9.4px;height:9.4px;background:#505050"></div><div style="position:absolute;left:645.94px;top:326.46px;width:9.4px;height:9.4px;background:#ff3020"></div><div style="position:absolute;left:656.38px;top:326.46px;width:9.4px;height:9.4px;background:#8a8a8a"></div><div style="position:absolute;left:666.82px;top:326.46px;width:9.4px;height:9.4px;background:#505050"></div><div style="position:absolute;left:677.26px;top:326.46px;width:9.4px;height:9.4px;background:#eef5f2"></div><div style="position:absolute;left:687.70px;top:326.46px;width:9.4px;height:9.4px;background:#9a9a9a"></div><div style="position:absolute;left:698.14px;top:326.46px;width:9.4px;height:9.4px;background:#f0f0ea"></div><div style="position:absolute;left:708.58px;top:326.46px;width:9.4px;height:9.4px;background:#4a4242"></div><div style="position:absolute;left:719.02px;top:326.46px;width:9.4px;height:9.4px;background:#707880"></div><div style="position:absolute;left:729.46px;top:326.46px;width:9.4px;height:9.4px;background:#4a4a4a"></div><div style="position:absolute;left:739.90px;top:326.46px;width:9.4px;height:9.4px;background:#484848"></div><div style="position:absolute;left:750.34px;top:326.46px;width:9.4px;height:9.4px;background:#8a3a35"></div><div style="position:absolute;left:760.78px;top:326.46px;width:9.4px;height:9.4px;background:#f3ebe8"></div><div style="position:absolute;left:771.22px;top:326.46px;width:9.4px;height:9.4px;background:#f7ecea"></div><div style="position:absolute;left:781.66px;top:326.46px;width:9.4px;height:9.4px;background:#333333"></div><div style="position:absolute;left:792.10px;top:326.46px;width:9.4px;height:9.4px;background:#c0c0c0"></div><div style="position:absolute;left:635.50px;top:336.90px;width:9.4px;height:9.4px;background:#fbe8e4"></div><div style="position:absolute;left:645.94px;top:336.90px;width:9.4px;height:9.4px;background:#d8e4e4"></div><div style="position:absolute;left:656.38px;top:336.90px;width:9.4px;height:9.4px;background:#ff3a28"></div><div style="position:absolute;left:666.82px;top:336.90px;width:9.4px;height:9.4px;background:#b8b8b8"></div><div style="position:absolute;left:677.26px;top:336.90px;width:9.4px;height:9.4px;background:#f8ece8"></div><div style="position:absolute;left:687.70px;top:336.90px;width:9.4px;height:9.4px;background:#f0efe9"></div><div style="position:absolute;left:698.14px;top:336.90px;width:9.4px;height:9.4px;background:#4a4a4a"></div><div style="position:absolute;left:708.58px;top:336.90px;width:9.4px;height:9.4px;background:#5a5a5a"></div><div style="position:absolute;left:719.02px;top:336.90px;width:9.4px;height:9.4px;background:#4a4a4a"></div><div style="position:absolute;left:729.46px;top:336.90px;width:9.4px;height:9.4px;background:#5a6268"></div><div style="position:absolute;left:739.90px;top:336.90px;width:9.4px;height:9.4px;background:#909090"></div><div style="position:absolute;left:750.34px;top:336.90px;width:9.4px;height:9.4px;background:#f2efea"></div><div style="position:absolute;left:760.78px;top:336.90px;width:9.4px;height:9.4px;background:#ccd8d8"></div><div style="position:absolute;left:771.22px;top:336.90px;width:9.4px;height:9.4px;background:#f3f2ed"></div><div style="position:absolute;left:781.66px;top:336.90px;width:9.4px;height:9.4px;background:#8890a0"></div><div style="position:absolute;left:792.10px;top:336.90px;width:9.4px;height:9.4px;background:#6a6a6a"></div><div style="position:absolute;left:635.50px;top:347.34px;width:9.4px;height:9.4px;background:#444444"></div><div style="position:absolute;left:645.94px;top:347.34px;width:9.4px;height:9.4px;background:#efede8"></div><div style="position:absolute;left:656.38px;top:347.34px;width:9.4px;height:9.4px;background:#f4f2ee"></div><div style="position:absolute;left:666.82px;top:347.34px;width:9.4px;height:9.4px;background:#383838"></div><div style="position:absolute;left:677.26px;top:347.34px;width:9.4px;height:9.4px;background:#383838"></div><div style="position:absolute;left:687.70px;top:347.34px;width:9.4px;height:9.4px;background:#303030"></div><div style="position:absolute;left:698.14px;top:347.34px;width:9.4px;height:9.4px;background:#f3f2ec"></div><div style="position:absolute;left:708.58px;top:347.34px;width:9.4px;height:9.4px;background:#ecebe6"></div><div style="position:absolute;left:719.02px;top:347.34px;width:9.4px;height:9.4px;background:#3a3a3a"></div><div style="position:absolute;left:729.46px;top:347.34px;width:9.4px;height:9.4px;background:#f4f2ee"></div><div style="position:absolute;left:739.90px;top:347.34px;width:9.4px;height:9.4px;background:#1e1e1e"></div><div style="position:absolute;left:750.34px;top:347.34px;width:9.4px;height:9.4px;background:#3e3e3e"></div><div style="position:absolute;left:760.78px;top:347.34px;width:9.4px;height:9.4px;background:#2a2a2a"></div><div style="position:absolute;left:771.22px;top:347.34px;width:9.4px;height:9.4px;background:#404040"></div><div style="position:absolute;left:781.66px;top:347.34px;width:9.4px;height:9.4px;background:#484848"></div><div style="position:absolute;left:792.10px;top:347.34px;width:9.4px;height:9.4px;background:#ecebe6"></div><div style="position:absolute;left:635.50px;top:357.78px;width:9.4px;height:9.4px;background:#424242"></div><div style="position:absolute;left:645.94px;top:357.78px;width:9.4px;height:9.4px;background:#404040"></div><div style="position:absolute;left:656.38px;top:357.78px;width:9.4px;height:9.4px;background:#2a2a2a"></div><div style="position:absolute;left:666.82px;top:357.78px;width:9.4px;height:9.4px;background:#444444"></div><div style="position:absolute;left:677.26px;top:357.78px;width:9.4px;height:9.4px;background:#252525"></div><div style="position:absolute;left:687.70px;top:357.78px;width:9.4px;height:9.4px;background:#2a2a2a"></div><div style="position:absolute;left:698.14px;top:357.78px;width:9.4px;height:9.4px;background:#383838"></div><div style="position:absolute;left:708.58px;top:357.78px;width:9.4px;height:9.4px;background:#707880"></div><div style="position:absolute;left:719.02px;top:357.78px;width:9.4px;height:9.4px;background:#5a5a5a"></div><div style="position:absolute;left:729.46px;top:357.78px;width:9.4px;height:9.4px;background:#6a6a6a"></div><div style="position:absolute;left:739.90px;top:357.78px;width:9.4px;height:9.4px;background:#7a8590"></div><div style="position:absolute;left:750.34px;top:357.78px;width:9.4px;height:9.4px;background:#a0a0a0"></div><div style="position:absolute;left:760.78px;top:357.78px;width:9.4px;height:9.4px;background:#222222"></div><div style="position:absolute;left:771.22px;top:357.78px;width:9.4px;height:9.4px;background:#dde8e6"></div><div style="position:absolute;left:781.66px;top:357.78px;width:9.4px;height:9.4px;background:#4a4a4a"></div><div style="position:absolute;left:792.10px;top:357.78px;width:9.4px;height:9.4px;background:#e03525"></div><svg style="position:absolute;left:783px;top:328px" width="8" height="8" viewBox="0 0 8 8"><path d="M4.2,1.6 V5.8 M2.1,3.7 H6.3" stroke="#eeeeee" stroke-width="1.1"/></svg><svg style="position:absolute;left:660px;top:450px" width="140" height="25" viewBox="660 450 140 25"><rect x="672.5" y="456.9" width="9.2" height="9" fill="none" stroke="#7e7e7e" stroke-width="1"/><g fill="#444"><rect x="673.2" y="457.6" width="2.6" height="2.6"/><rect x="678.6" y="457.6" width="2.6" height="2.6"/><rect x="675.8" y="460.2" width="2.6" height="2.6"/><rect x="673.2" y="462.8" width="2.6" height="2.6"/><rect x="678.6" y="462.8" width="2.6" height="2.6"/></g><g fill="#8a8a8a"><rect x="675.8" y="457.6" width="2.8" height="2.6"/><rect x="673.2" y="460.2" width="2.6" height="2.6"/><rect x="678.4" y="460.2" width="2.8" height="2.6"/><rect x="675.8" y="462.8" width="2.8" height="2.6"/></g><path d="M697.8,459.6 L702.2,457.2 L706.6,459.6 L706.6,464.8 L702.2,467.2 L697.8,464.8 Z M697.8,459.6 L702.2,462 L706.6,459.6 M702.2,462 L702.2,467.2" fill="none" stroke="#7a7a7a" stroke-width="1"/><path d="M723.6,460 L723.6,458.6 Q723.6,456.5 726.2,456.5 Q728.8,456.5 728.8,458.6 L728.8,460" fill="none" stroke="#7a7a7a" stroke-width="1"/><rect x="722" y="460" width="8.4" height="6.5" fill="none" stroke="#7a7a7a" stroke-width="1"/><rect x="725.6" y="462.6" width="1.3" height="1.3" fill="#7a7a7a"/><path d="M761.3,458.4 L769.2,458.4 L769.2,466.3 L763.4,466.3 L761.3,464.2 Z" fill="#dcdcdc"/><path d="M762.6,459.6 L767.9,459.6 L767.9,465 L764.6,465 L764.6,462.6 L762.6,462.6 Z" fill="#2c2c2c"/><path d="M784.6,459.3 L793.8,459.3 M787.2,459.3 L787.2,457.7 L791.2,457.7 L791.2,459.3 M785.6,459.8 L786.1,467.4 L792.3,467.4 L792.8,459.8" fill="none" stroke="#777" stroke-width="1"/><line x1="788.2" y1="461" x2="788.2" y2="466" stroke="#777" stroke-width="0.9"/><line x1="790.3" y1="461" x2="790.3" y2="466" stroke="#777" stroke-width="0.9"/></svg><svg style="position:absolute;left:0;top:0" width="850" height="475" viewBox="0 0 850 475"><text x="7.5" y="15.7" font-family="Liberation Sans" font-size="11.2" font-weight="normal" fill="#151515" textLength="88.3" lengthAdjust="spacingAndGlyphs">Save for Web (50%)</text><text x="51.8" y="47.6" font-family="Liberation Sans" font-size="9.8" font-weight="normal" fill="#b0b0b0" textLength="31.7" lengthAdjust="spacingAndGlyphs">Original</text><text x="106.7" y="47.9" font-family="Liberation Sans" font-size="9.8" font-weight="normal" fill="#f2f2f2" textLength="41.0" lengthAdjust="spacingAndGlyphs">Optimized</text><text x="172.2" y="47.9" font-family="Liberation Sans" font-size="9.8" font-weight="normal" fill="#b0b0b0" textLength="19.8" lengthAdjust="spacingAndGlyphs">2-Up</text><text x="216.4" y="47.9" font-family="Liberation Sans" font-size="9.8" font-weight="normal" fill="#b0b0b0" textLength="19.8" lengthAdjust="spacingAndGlyphs">4-Up</text><text x="604.2" y="43.8" font-family="Liberation Sans" font-size="10.2" font-weight="normal" fill="#d8d8d8" textLength="30.4" lengthAdjust="spacingAndGlyphs">Preset:</text><text x="644.4" y="43.8" font-family="Liberation Sans" font-size="10.2" font-weight="normal" fill="#e4e4e4" textLength="45.3" lengthAdjust="spacingAndGlyphs">[Unnamed]</text><text x="613.3" y="65.5" font-family="Liberation Sans" font-size="10.2" font-weight="normal" fill="#e4e4e4" textLength="26.5" lengthAdjust="spacingAndGlyphs">PNG-8</text><text x="605.6" y="87.1" font-family="Liberation Sans" font-size="10.2" font-weight="normal" fill="#e4e4e4" textLength="44.8" lengthAdjust="spacingAndGlyphs">Perceptual</text><text x="605.6" y="108.9" font-family="Liberation Sans" font-size="10.2" font-weight="normal" fill="#e4e4e4" textLength="36.3" lengthAdjust="spacingAndGlyphs">Diffusion</text><text x="741.8" y="87.6" font-family="Liberation Sans" font-size="10.2" font-weight="normal" fill="#d8d8d8" textLength="28.7" lengthAdjust="spacingAndGlyphs">Colors:</text><text x="778" y="87.6" font-family="Liberation Sans" font-size="10.2" font-weight="normal" fill="#e8e8e8" textLength="14.9" lengthAdjust="spacingAndGlyphs">128</text><text x="742.4" y="109.2" font-family="Liberation Sans" font-size="10.2" font-weight="normal" fill="#d8d8d8" textLength="28.1" lengthAdjust="spacingAndGlyphs">Dither:</text><text x="778" y="109.2" font-family="Liberation Sans" font-size="10.2" font-weight="normal" fill="#e8e8e8" textLength="24.3" lengthAdjust="spacingAndGlyphs">100%</text><text x="620" y="130.9" font-family="Liberation Sans" font-size="10.2" font-weight="normal" fill="#d8d8d8" textLength="56.9" lengthAdjust="spacingAndGlyphs">Transparency</text><text x="743" y="129.6" font-family="Liberation Sans" font-size="10.2" font-weight="normal" fill="#d8d8d8" textLength="27.4" lengthAdjust="spacingAndGlyphs">Matte:</text><text x="605.6" y="151.8" font-family="Liberation Sans" font-size="10.2" font-weight="normal" fill="#e4e4e4" textLength="99.0" lengthAdjust="spacingAndGlyphs">No Transparency Dither</text><text x="735.6" y="151.4" font-family="Liberation Sans" font-size="10.2" font-weight="normal" fill="#888888" textLength="34.8" lengthAdjust="spacingAndGlyphs">Amount:</text><text x="620" y="172.6" font-family="Liberation Sans" font-size="10.2" font-weight="normal" fill="#d8d8d8" textLength="42.0" lengthAdjust="spacingAndGlyphs">Interlaced</text><text x="725" y="172.7" font-family="Liberation Sans" font-size="10.2" font-weight="normal" fill="#d8d8d8" textLength="45.4" lengthAdjust="spacingAndGlyphs">Web Snap:</text><text x="776.9" y="172.7" font-family="Liberation Sans" font-size="10.2" font-weight="normal" fill="#e8e8e8" textLength="15.1" lengthAdjust="spacingAndGlyphs">0%</text><text x="620" y="191.3" font-family="Liberation Sans" font-size="10.2" font-weight="normal" fill="#d8d8d8" textLength="80.2" lengthAdjust="spacingAndGlyphs">Embed Color Profile</text><text x="618.8" y="216.5" font-family="Liberation Sans" font-size="10.2" font-weight="normal" fill="#d8d8d8" textLength="69.5" lengthAdjust="spacingAndGlyphs">Convert to sRGB</text><text x="596.8" y="236.1" font-family="Liberation Sans" font-size="10.2" font-weight="normal" fill="#c4c4c4" textLength="36.6" lengthAdjust="spacingAndGlyphs">Preview:</text><text x="640.4" y="236.1" font-family="Liberation Sans" font-size="10.2" font-weight="normal" fill="#e4e4e4" textLength="55.0" lengthAdjust="spacingAndGlyphs">Monitor Color</text><text x="596.8" y="257.7" font-family="Liberation Sans" font-size="10.2" font-weight="normal" fill="#c4c4c4" textLength="43.2" lengthAdjust="spacingAndGlyphs">Metadata:</text><text x="647.6" y="257.7" font-family="Liberation Sans" font-size="10.2" font-weight="normal" fill="#e4e4e4" textLength="40.7" lengthAdjust="spacingAndGlyphs">Copyright</text><text x="605" y="281" font-family="Liberation Sans" font-size="10.2" font-weight="normal" fill="#d8d8d8" textLength="47.0" lengthAdjust="spacingAndGlyphs">Color Table</text><text x="643" y="465" font-family="Liberation Sans" font-size="9" font-weight="normal" fill="#dadada" textLength="13.0" lengthAdjust="spacingAndGlyphs">128</text></svg><svg style="position:absolute;left:0;top:0" width="850" height="475" viewBox="0 0 850 475"><line x1="494" y1="72.2" x2="584.1" y2="64.5" stroke="#ff0000" stroke-width="3.6"/><polygon points="604,62.8 579.7,72.4 584.1,64.5 578.5,57.5" fill="#ff0000"/><line x1="808" y1="10" x2="792.8" y2="52.2" stroke="#ff0000" stroke-width="3.6"/><polygon points="786,71 787.4,44.9 792.8,52.2 801.5,50.0" fill="#ff0000"/><line x1="514" y1="320.5" x2="580.7" y2="273.3" stroke="#ff0000" stroke-width="3.6"/><polygon points="597,261.8 580.9,282.4 580.7,273.3 572.3,270.1" fill="#ff0000"/></svg></body></html>
